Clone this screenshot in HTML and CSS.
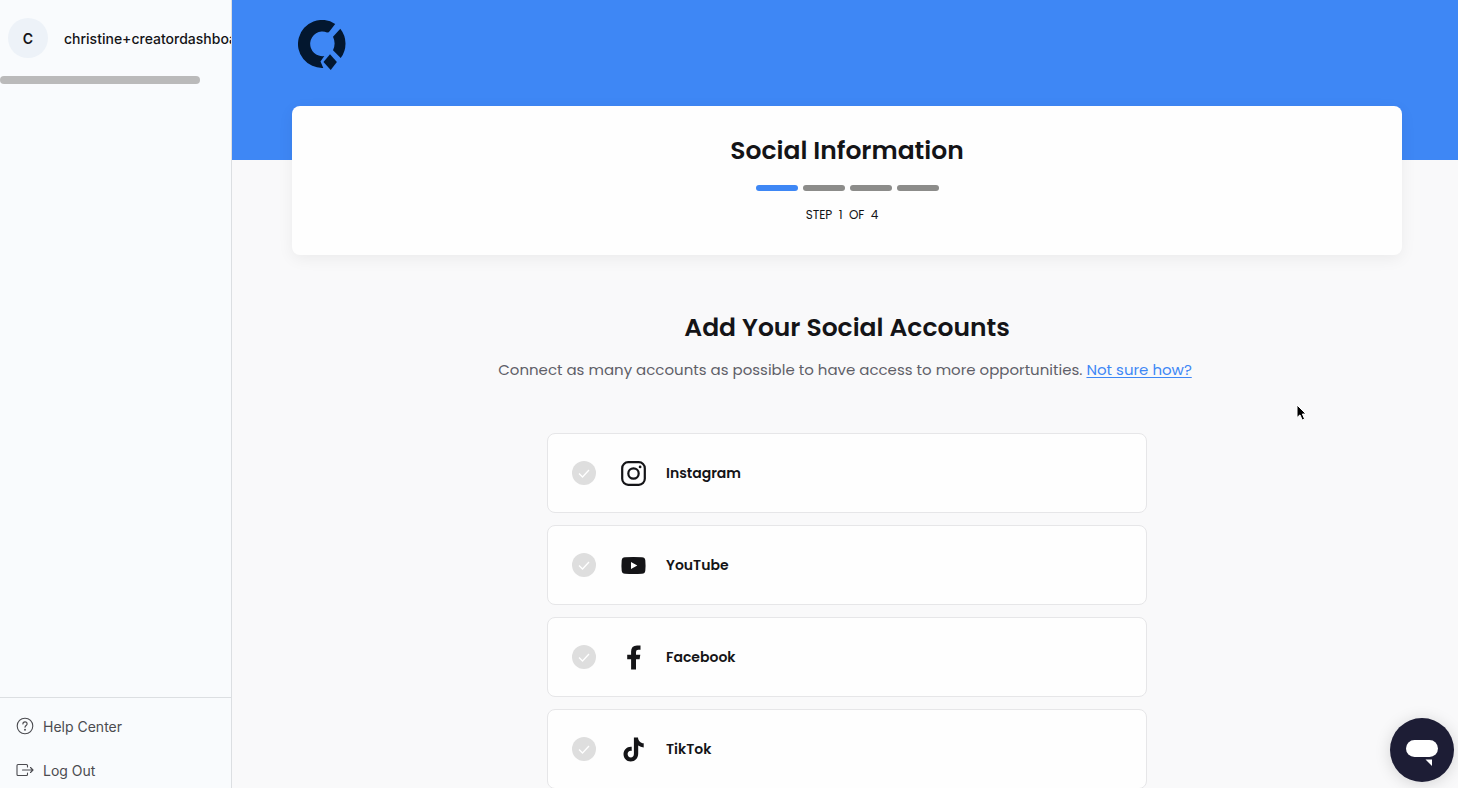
FILE: index.html
```html
<!DOCTYPE html>
<html lang="en">
<head>
  <meta charset="UTF-8">
  <meta name="viewport" content="width=device-width, initial-scale=1.0">
  <title>Social Information</title>
  <link rel="stylesheet" href="styles.css">
</head>
<body>

  <aside class="sidebar">
    <div class="user">
      <span class="avatar">C</span>
      <span class="user-name">christine+creatordashboard</span>
    </div>
    <div class="scrollbar"></div>

    <nav class="sidebar-links">
      <a href="#help">
        <svg width="18" height="18" viewBox="0 0 18 18" fill="none" stroke="currentColor" stroke-width="1.1" stroke-linecap="round">
          <circle cx="9" cy="9" r="7.8"/>
          <path d="M6.9 7c0-1.3.9-2.1 2.1-2.1s2.1.8 2.1 2c0 1.500-2.1 1.700-2.1 3.400"/>
          <circle cx="9" cy="12.7" r=".4" fill="currentColor"/>
        </svg>
        Help Center
      </a>
      <a href="#logout">
        <svg width="18" height="18" viewBox="0 0 18 18" fill="none" stroke="currentColor" stroke-width="1.1" stroke-linecap="round" stroke-linejoin="round">
          <path d="M11.500 6V4.500Q11.500 3.500 10.500 3.500H2Q1 3.500 1 4.500V13.500Q1 14.500 2 14.500H10.500Q11.500 14.500 11.500 13.500V12M6.500 9H17M14.500 6.500L17 9L14.500 11.500"/>
        </svg>
        Log Out
      </a>
    </nav>
  </aside>

  <main class="main">
    <header class="banner">
      <svg class="logo" width="48" height="50" viewBox="0 0 48 50" fill="#03172f">
        <path d="M37.200 3.900A24 24 0 1 0 25.300 47.900L22.500 41.500L26.300 36A12.300 12.300 0 1 1 29 12.400L30.800 12.300Z"/>
        <path d="M42.300 8.700A24 24 0 0 1 42.700 38L35 30.200Q38.200 23.500 35 16.800Z"/>
        <path d="M32 34.300L38.900 42L32.700 50L25.500 42Z"/>
      </svg>
    </header>

    <div class="content">
      <section class="step-card">
        <h1>Social Information</h1>
        <div class="steps">
          <span class="step active"></span>
          <span class="step"></span>
          <span class="step"></span>
          <span class="step"></span>
        </div>
        <p class="step-label">STEP&nbsp; 1&nbsp; OF&nbsp; 4</p>
      </section>

      <section class="accounts">
        <h2>Add Your Social Accounts</h2>
        <p class="intro">Connect as many accounts as possible to have access to more opportunities. <a href="#how">Not sure how?</a></p>

        <div class="account-list">
          <button class="account" type="button">
            <svg class="check" width="24" height="24" viewBox="0 0 24 24"><circle cx="12" cy="12" r="12"/><path d="M7 12.500L10.500 16L17 9"/></svg>
            <svg class="brand" width="25" height="25" viewBox="0 0 25 25" fill="none" stroke="currentColor" stroke-width="2.200">
              <rect x="1.200" y="1.200" width="22.600" height="22.600" rx="6"/>
              <circle cx="12.500" cy="12.500" r="5.200"/>
              <circle cx="19.100" cy="5.900" r="1.400" fill="currentColor" stroke="none"/>
            </svg>
            Instagram
          </button>

          <button class="account" type="button">
            <svg class="check" width="24" height="24" viewBox="0 0 24 24"><circle cx="12" cy="12" r="12"/><path d="M7 12.500L10.500 16L17 9"/></svg>
            <svg class="brand" width="25" height="25" viewBox="0 0 25 25" fill="currentColor">
              <path fill-rule="evenodd" d="M4 4.200Q12.500 3.600 21 4.200Q24 4.400 24.300 7.200Q24.800 12.500 24.300 17.800Q24 20.600 21 20.800Q12.500 21.400 4 20.800Q1 20.600.7 17.800Q.2 12.500.7 7.200Q1 4.400 4 4.200ZM10 8.900V16.100L16.300 12.500Z"/>
            </svg>
            YouTube
          </button>

          <button class="account" type="button">
            <svg class="check" width="24" height="24" viewBox="0 0 24 24"><circle cx="12" cy="12" r="12"/><path d="M7 12.500L10.500 16L17 9"/></svg>
            <svg class="brand" width="25" height="25" viewBox="0 0 25 25" fill="currentColor">
              <path d="M10.100 24.500V14.200H6.200V9.700H10.100V6.600Q10.100.500 16 .500H19.500V4.800H17.200Q15 4.800 15 7V9.700H19.300L18.600 14.200H15V24.500Z"/>
            </svg>
            Facebook
          </button>

          <button class="account" type="button">
            <svg class="check" width="24" height="24" viewBox="0 0 24 24"><circle cx="12" cy="12" r="12"/><path d="M7 12.500L10.500 16L17 9"/></svg>
            <svg class="brand" width="25" height="25" viewBox="0 0 25 25" fill="currentColor">
              <path d="M12.900.400H17C17.200 3.700 19.500 6 22.700 6.300V10.400Q19.600 10.300 17.200 8.600V16.600C17.200 21.400 13.900 24.600 9.700 24.600S2.500 21.300 2.500 17.100C2.500 12.600 6.200 9.200 10.700 9.700V13.900C8.400 13.300 6.600 14.900 6.600 17C6.600 19 8 20.400 9.800 20.400S12.900 19.100 12.900 16.900Z"/>
            </svg>
            TikTok
          </button>
        </div>
      </section>
    </div>
  </main>

  <button class="chat" type="button" aria-label="Open chat">
    <svg width="64" height="64" viewBox="0 0 64 64" fill="#fff">
      <rect x="16" y="22" width="32" height="17" rx="8.500"/>
      <path d="M35.500 41.500H42V48Z"/>
    </svg>
  </button>

  <svg class="cursor" width="12" height="18" viewBox="0 0 12 18">
    <path d="M1 1V13.500L4 10.900L6.200 16L8.600 15L6.400 10H10Z" fill="#000" stroke="#fff" stroke-width="1"/>
  </svg>

</body>
</html>
```
FILE: styles.css
```css
* {
  box-sizing: border-box;
}

body {
  display: flex;
  height: 100vh;
  margin: 0;
  overflow: hidden;
  font-family: Poppins, Inter, sans-serif;
  color: #141417;
  background: #f9f9fa;
}

h1, h2, p {
  margin: 0;
}

/* Sidebar */
.sidebar {
  display: flex;
  flex-direction: column;
  flex: 0 0 232px;
  overflow: hidden;
  font-family: Inter, sans-serif;
  background: #f9fbfd;
  border-right: 1px solid #dcdfe2;
}

.user {
  display: flex;
  align-items: center;
  gap: 16px;
  height: 76px;
  padding-left: 8px;
  font-size: 14px;
  font-weight: 500;
}

.avatar {
  display: flex;
  flex: 0 0 40px;
  align-items: center;
  justify-content: center;
  height: 40px;
  border-radius: 50%;
  background: #edf2f8;
  font-weight: 600;
}

.user-name {
  white-space: nowrap;
}

.scrollbar {
  width: 200px;
  height: 8px;
  border-radius: 4px;
  background: #bababa;
}

.sidebar-links {
  display: flex;
  flex-direction: column;
  gap: 8px;
  margin-top: auto;
  padding-top: 10px;
  border-top: 1px solid #dcdfe2;
}

.sidebar-links a {
  display: flex;
  align-items: center;
  gap: 9px;
  height: 36px;
  padding-left: 16px;
  color: #4b4b50;
  font-size: 14px;
  text-decoration: none;
}

/* Main */
.main {
  flex: 1;
  min-width: 0;
  overflow: hidden;
}

.banner {
  height: 160px;
  padding: 20px 66px;
  background: #3e87f5;
}

.logo {
  display: block;
}

.content {
  margin-top: -54px;
  padding: 0 56px 0 60px;
  text-align: center;
}

.step-card {
  position: relative;
  height: 149px;
  padding-top: 27px;
  border-radius: 8px;
  background: #fefefe;
  box-shadow: 0 4px 16px rgba(0, 0, 0, 0.06);
}

h1, h2 {
  font-size: 25px;
  font-weight: 600;
  line-height: 36px;
}

.steps {
  display: flex;
  justify-content: center;
  gap: 5px;
  margin-top: 16px;
}

.step {
  width: 42px;
  height: 6px;
  border-radius: 3px;
  background: #8c8c8a;
}

.step.active {
  background: #3e87f5;
}

.step-label {
  margin-top: 14px;
  padding-right: 10px;
  font-size: 12px;
  line-height: 20px;
}

.accounts {
  margin-top: 55px;
}

.intro {
  margin-top: 12px;
  padding-right: 4px;
  color: #5f6068;
  font-size: 15px;
  line-height: 24px;
}

.intro a {
  color: #3e87f5;
  text-underline-offset: 2px;
}

.account-list {
  display: flex;
  flex-direction: column;
  gap: 12px;
  max-width: 600px;
  margin: 51px auto 0;
}

.account {
  display: flex;
  align-items: center;
  height: 80px;
  padding: 0 24px;
  border: 1px solid #e6e6e8;
  border-radius: 8px;
  background: #fefefe;
  color: #141417;
  font: inherit;
  font-size: 14px;
  font-weight: 600;
  cursor: pointer;
}

.check {
  margin-right: 25px;
  fill: #dedede;
}

.check path {
  fill: none;
  stroke: #fff;
  stroke-width: 1.3;
}

.brand {
  margin-right: 20px;
}

/* Floating */
.chat {
  position: fixed;
  right: 4px;
  bottom: 6px;
  width: 64px;
  height: 64px;
  padding: 0;
  border: 0;
  border-radius: 50%;
  background: #1d1d35;
  box-shadow: 0 2px 16px rgba(0, 0, 0, 0.15);
  cursor: pointer;
}

.cursor {
  position: fixed;
  left: 1296px;
  top: 404px;
  pointer-events: none;
}
```
